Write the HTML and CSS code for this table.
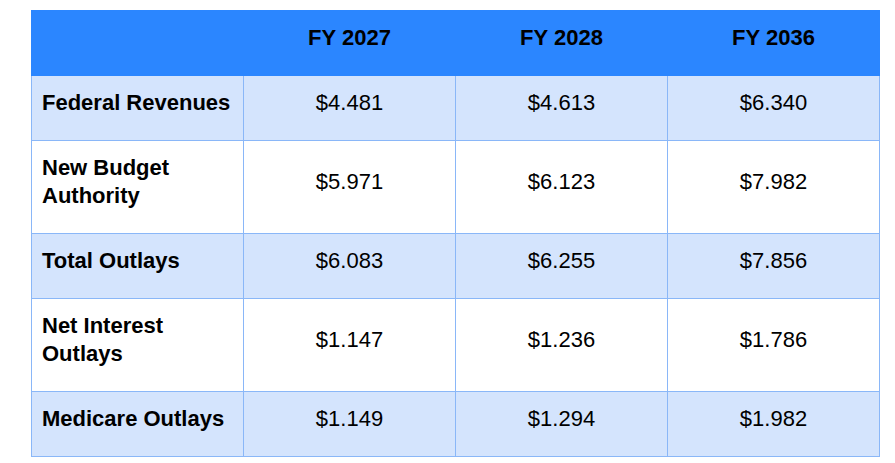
FILE: index.html
```html
<!DOCTYPE html>
<html lang="en">
<head>
<meta charset="utf-8">
<title>Budget Projections</title>
<link rel="stylesheet" href="styles.css">
</head>
<body>
<table class="budget">
  <thead>
    <tr>
      <th class="label-col"></th>
      <th>FY 2027</th>
      <th>FY 2028</th>
      <th>FY 2036</th>
    </tr>
  </thead>
  <tbody>
    <tr class="shaded">
      <td class="label">Federal Revenues</td>
      <td>$4.481</td>
      <td>$4.613</td>
      <td>$6.340</td>
    </tr>
    <tr>
      <td class="label">New Budget<br>Authority</td>
      <td>$5.971</td>
      <td>$6.123</td>
      <td>$7.982</td>
    </tr>
    <tr class="shaded">
      <td class="label">Total Outlays</td>
      <td>$6.083</td>
      <td>$6.255</td>
      <td>$7.856</td>
    </tr>
    <tr>
      <td class="label">Net Interest<br>Outlays</td>
      <td>$1.147</td>
      <td>$1.236</td>
      <td>$1.786</td>
    </tr>
    <tr class="shaded">
      <td class="label">Medicare Outlays</td>
      <td>$1.149</td>
      <td>$1.294</td>
      <td>$1.982</td>
    </tr>
  </tbody>
</table>
</body>
</html>
```

FILE: styles.css
```css
html, body {
  margin: 0;
  padding: 0;
  background: #ffffff;
}

body {
  padding: 10px 0 0 31px;
  font-family: "Liberation Sans", Arial, sans-serif;
  color: #000000;
}

.budget {
  border-collapse: collapse;
  table-layout: fixed;
  width: 849px;
  font-size: 22px;
  line-height: 28px;
}

.budget th,
.budget td {
  width: 25%;
  padding: 13px 10px 23px;
  vertical-align: middle;
  text-align: center;
}

.budget th {
  background: #2b86ff;
  font-weight: bold;
  border: 1px solid #2b86ff;
  height: 28px;
}

.budget td {
  border: 1px solid #8ab7f8;
  font-weight: normal;
}

.budget td.label {
  text-align: left;
  font-weight: bold;
  vertical-align: top;
}

.budget tr.shaded td {
  background: #d4e4fd;
}
```
